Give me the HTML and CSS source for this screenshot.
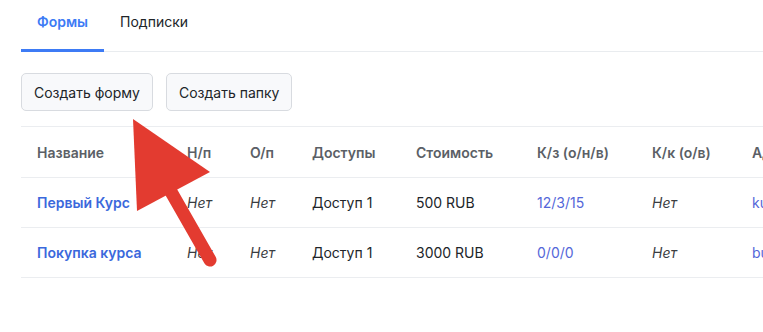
FILE: index.html
```html
<!DOCTYPE html>
<html lang="ru">
<head>
    <meta charset="UTF-8">
    <meta name="viewport" content="width=device-width, initial-scale=1.0">
    <title>Формы</title>
    <link rel="stylesheet" href="styles.css">
</head>

<body>
    <div class="page">
        <ul class="tabs">
            <li class="tab active">Формы</li>
            <li class="tab">Подписки</li>
        </ul>

        <div class="actions">
            <button class="btn">Создать форму</button>
            <button class="btn">Создать папку</button>
        </div>

        <table class="forms">
            <colgroup>
                <col style="width: 150px">
                <col style="width: 63px">
                <col style="width: 62px">
                <col style="width: 104px">
                <col style="width: 121px">
                <col style="width: 115px">
                <col style="width: 100px">
                <col style="width: 120px">
            </colgroup>
            <thead>
                <tr>
                    <th>Название</th>
                    <th>Н/п</th>
                    <th>О/п</th>
                    <th>Доступы</th>
                    <th>Стоимость</th>
                    <th>К/з (о/н/в)</th>
                    <th>К/к (о/в)</th>
                    <th>Адрес</th>
                </tr>
            </thead>
            <tbody>
                <tr>
                    <td><a class="title" href="#">Первый Курс</a></td>
                    <td><i>Нет</i></td>
                    <td><i>Нет</i></td>
                    <td>Доступ 1</td>
                    <td>500 RUB</td>
                    <td><span class="count">12/3/15</span></td>
                    <td><i>Нет</i></td>
                    <td><span class="count">kurs</span></td>
                </tr>
                <tr>
                    <td><a class="title" href="#">Покупка курса</a></td>
                    <td><i>Нет</i></td>
                    <td><i>Нет</i></td>
                    <td>Доступ 1</td>
                    <td>3000 RUB</td>
                    <td><span class="count">0/0/0</span></td>
                    <td><i>Нет</i></td>
                    <td><span class="count">buy</span></td>
                </tr>
            </tbody>
        </table>
    </div>

    <!-- стрелка-подсказка поверх страницы -->
    <svg class="pointer" width="763" height="332" viewBox="0 0 763 332">
        <line x1="170" y1="190" x2="210" y2="260" stroke="#e33b30" stroke-width="13" stroke-linecap="round"/>
        <polygon points="133,119 137,211 210,172" fill="#e33b30"/>
    </svg>
</body>
</html>
```

FILE: styles.css
```css
* {
    margin: 0;
    padding: 0;
    box-sizing: border-box;
}

html, body {
    width: 763px;
    height: 332px;
    overflow: hidden;
    background: #fff;
}

body {
    position: relative;
    font-family: Inter, "Noto Sans", sans-serif;
    font-size: 14px;
    color: #212529;
}

.page {
    padding: 0 0 0 21px;
    width: 1000px;
}

.tabs {
    display: flex;
    list-style: none;
    height: 52px;
    border-bottom: 1px solid #e9ecef;
}

.tab {
    padding: 11px 16px 0;
    height: 52px;
    line-height: 22px;
    color: #212529;
    border-bottom: 3px solid transparent;
}

.tab.active {
    color: #3d7bf5;
    font-weight: 600;
    border-bottom-color: #3d7bf5;
}

.actions {
    display: flex;
    gap: 13px;
    margin-top: 21px;
}

.btn {
    height: 38px;
    padding: 0 12px;
    background-color: #f8f9fb;
    border: 1px solid #d8dbe0;
    border-radius: 5px;
    font-family: Inter, "Noto Sans", sans-serif;
    font-size: 14px;
    color: #212529;
}

.forms {
    margin-top: 15px;
    width: 835px;
    table-layout: fixed;
    border-collapse: collapse;
    border-top: 1px solid #ebedf0;
}

.forms th,
.forms td {
    text-align: left;
    padding: 0 0 0 16px;
    white-space: nowrap;
    overflow: hidden;
    border-bottom: 1px solid #ebedf0;
}

.forms th {
    height: 51px;
    font-weight: 600;
    color: #5b5f66;
}

.forms td {
    height: 50px;
}

.forms i {
    color: #3a3d42;
}

.title {
    color: #3b68dc;
    font-weight: 600;
    text-decoration: none;
}

.count {
    color: #5567d9;
}

.pointer {
    position: absolute;
    left: 0;
    top: 0;
    pointer-events: none;
}
```
